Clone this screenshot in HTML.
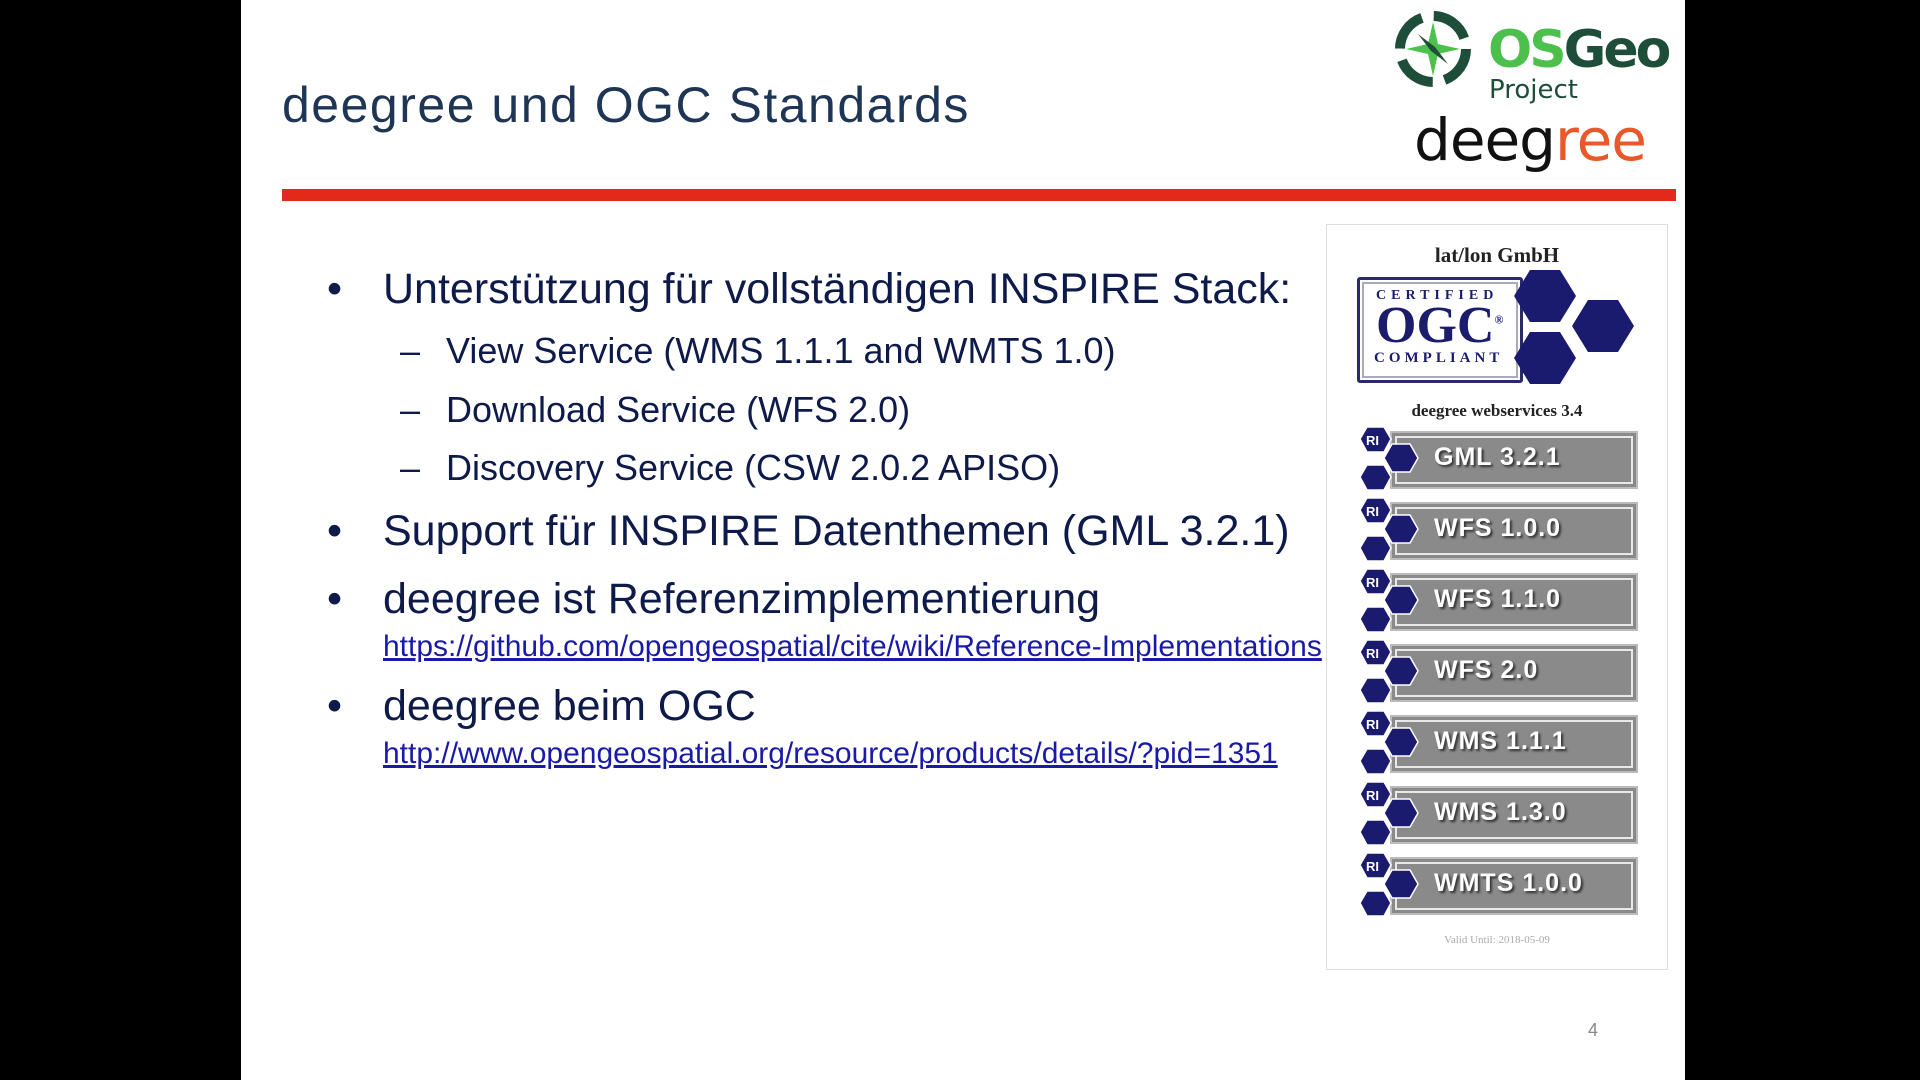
<!DOCTYPE html>
<html><head><meta charset="utf-8"><style>
body{margin:0;width:1920px;height:1080px;background:#000;overflow:hidden;font-family:"Liberation Sans",sans-serif}
#s{position:absolute;left:241px;top:0;width:1444px;height:1080px;background:#fff;overflow:hidden}
.a{position:absolute;white-space:nowrap}
.t{color:#0e1b4a}
.lk{color:#1a1aa8;text-decoration:underline;font-size:30px}
.bar{position:absolute;left:1390px;width:244px;height:54px;background:#8a8a8a;border:2px solid #bbb;box-shadow:inset 0 0 0 3px #8a8a8a,inset 0 0 0 5px #e8e8e8}
.bt{position:absolute;left:1434px;color:#fff;font:bold 25px "Liberation Sans",sans-serif;text-shadow:2px 2px 2px #333;letter-spacing:1px}
</style></head><body>
<div id="s"></div>
<div class="a" style="left:282px;top:76px;font-size:50px;letter-spacing:1.5px;color:#1f3556">deegree und OGC Standards</div>
<div class="a" style="left:282px;top:189px;width:1394px;height:12px;background:#e22a1a"></div>

<!-- logo -->
<svg class="a" style="left:1388px;top:4px" width="90" height="90" viewBox="0 0 90 90">
<circle cx="45" cy="45" r="33" fill="none" stroke="#1e4d3a" stroke-width="10" stroke-dasharray="40 12"/>
<path d="M45 18 L50 40 L72 45 L50 50 L45 72 L40 50 L18 45 L40 40Z" fill="#4cc24c"/>
<path d="M30 30 L47 43 L60 60 L43 47Z" fill="#1e4d3a"/>
</svg>
<div class="a" style="left:1488px;top:20px;font:bold 52px 'DejaVu Sans',sans-serif;letter-spacing:-3px"><span style="color:#4cbf4c">OS</span><span style="color:#1e4d3a">Geo</span></div>
<div class="a" style="left:1489px;top:75px;font:26px 'DejaVu Sans',sans-serif;color:#1e4d3a">Project</div>
<div class="a" style="left:1414px;top:106px;font:58px 'DejaVu Sans',sans-serif;color:#111;letter-spacing:-1px">deeg<span style="color:#e8582a">ree</span></div>

<!-- bullets -->
<div class="a t" style="left:327px;top:265px;font-size:43px">•</div>
<div class="a t" style="left:383px;top:265px;font-size:43px">Unterstützung für vollständigen INSPIRE Stack:</div>
<div class="a t" style="left:400px;top:330px;font-size:36px">–</div>
<div class="a t" style="left:446px;top:330px;font-size:36px">View Service (WMS 1.1.1 and WMTS 1.0)</div>
<div class="a t" style="left:400px;top:389px;font-size:36px">–</div>
<div class="a t" style="left:446px;top:389px;font-size:36px">Download Service (WFS 2.0)</div>
<div class="a t" style="left:400px;top:447px;font-size:36px">–</div>
<div class="a t" style="left:446px;top:447px;font-size:36px">Discovery Service (CSW 2.0.2 APISO)</div>
<div class="a t" style="left:327px;top:507px;font-size:43px">•</div>
<div class="a t" style="left:383px;top:507px;font-size:43px">Support für INSPIRE Datenthemen (GML 3.2.1)</div>
<div class="a t" style="left:327px;top:575px;font-size:43px">•</div>
<div class="a t" style="left:383px;top:575px;font-size:43px">deegree ist Referenzimplementierung</div>
<div class="a" style="left:383px;top:630px;width:940px;height:40px;overflow:hidden"><div class="a lk" style="left:0;top:0">https://github.com/opengeospatial/cite/wiki/Reference-Implementations</div></div>
<div class="a t" style="left:327px;top:682px;font-size:43px">•</div>
<div class="a t" style="left:383px;top:682px;font-size:43px">deegree beim OGC</div>
<div class="a lk" style="left:383px;top:737px">http://www.opengeospatial.org/resource/products/details/?pid=1351</div>
<div class="a" style="left:1588px;top:1020px;font-size:18px;color:#888">4</div>

<!-- badge -->
<div class="a" style="left:1326px;top:224px;width:340px;height:744px;border:1px solid #ddd;background:#fff"></div>
<div class="a" style="left:1326px;top:243px;width:342px;text-align:center;font:bold 21px 'Liberation Serif',serif;color:#222">lat/lon GmbH</div>
<div class="a" style="left:1357px;top:277px;width:160px;height:100px;border:3px solid #2a2a6a;border-radius:3px;box-shadow:inset 0 0 0 2px #fff,inset 0 0 0 4px #aab"></div>
<div class="a" style="left:1376px;top:288px;font:bold 14px 'Liberation Serif',serif;color:#1c1c6c;letter-spacing:5px">CERTIFIED</div>
<div class="a" style="left:1376px;top:296px;font:bold 52px 'Liberation Serif',serif;color:#1c1c6c">OGC<sup style="font-size:12px">®</sup></div>
<div class="a" style="left:1374px;top:350px;font:bold 15px 'Liberation Serif',serif;color:#1c1c6c;letter-spacing:4px">COMPLIANT</div>
<svg class="a" style="left:1510px;top:268px" width="140" height="120" viewBox="0 0 140 120">
<g fill="#1a1a6e"><polygon points="4,28 20,2 50,2 66,28 50,54 20,54"/><polygon points="62,58 78,32 108,32 124,58 108,84 78,84"/><polygon points="4,90 20,64 50,64 66,90 50,116 20,116"/></g></svg>
<div class="a" style="left:1326px;top:401px;width:342px;text-align:center;font:bold 17px 'Liberation Serif',serif;color:#222">deegree webservices 3.4</div>

<div id="bd"></div>
<script>
var n=["GML 3.2.1","WFS 1.0.0","WFS 1.1.0","WFS 2.0","WMS 1.1.1","WMS 1.3.0","WMTS 1.0.0"],h="";
for(var i=0;i<7;i++){var y=431+i*71;
h+='<div class="bar" style="top:'+y+'px"></div>';
h+='<svg class="a" style="left:1358px;top:'+(y-6)+'px" width="80" height="70" viewBox="0 0 80 70"><g fill="#1a1a6e" stroke="#fff" stroke-width="1.5"><polygon points="2,14 9,2 26,2 33,14 26,27 9,27"/><polygon points="2,52 9,40 26,40 33,52 26,65 9,65"/><polygon points="26,33 34,19 52,19 60,33 52,47 34,47"/></g><text x="8" y="20" fill="#fff" font-family="Liberation Sans" font-weight="bold" font-size="13">RI</text></svg>';
h+='<div class="bt" style="top:'+(y+12)+'px">'+n[i]+'</div>';}
document.getElementById("bd").innerHTML=h;
</script>
<div class="a" style="left:1326px;top:934px;width:342px;text-align:center;font:11px 'Liberation Serif',serif;color:#aaa">Valid Until: 2018-05-09</div>
</body></html>
